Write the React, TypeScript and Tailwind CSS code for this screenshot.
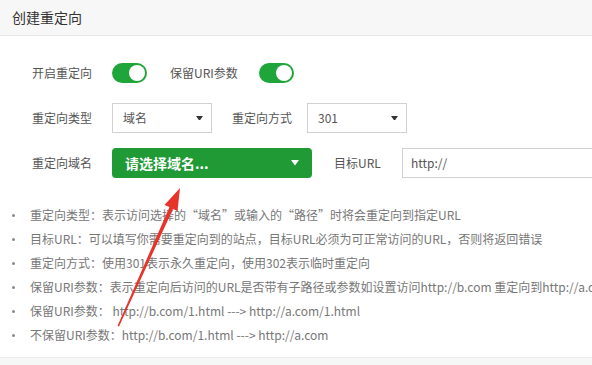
import React from "react";

const font = { fontFamily: '"Noto Sans CJK SC", "Noto Sans", sans-serif' };

function Toggle() {
  return (
    <div className="relative h-[20px] w-[35px] rounded-full bg-[#20a53a]">
      <div className="absolute right-[2px] top-[2px] h-[16px] w-[16px] rounded-full bg-white" />
    </div>
  );
}

function Caret({ color, size = 8 }: { color: string; size?: number }) {
  return (
    <svg width={size} height={size * 0.7} viewBox="0 0 10 7">
      <polygon points="0,0 10,0 5,7" fill={color} />
    </svg>
  );
}

function Select({ value }: { value: string }) {
  return (
    <div className="flex h-[30px] w-[100px] items-center justify-between border border-[#d0d0d0] bg-white pl-[10px] pr-[8px] text-[12px] text-[#555]">
      <span>{value}</span>
      <Caret color="#333" size={7} />
    </div>
  );
}

const items = [
  "重定向类型：表示访问选择的“域名”或输入的“路径”时将会重定向到指定URL",
  "目标URL：可以填写你需要重定向到的站点，目标URL必须为可正常访问的URL，否则将返回错误",
  "重定向方式：使用301表示永久重定向，使用302表示临时重定向",
  "保留URI参数：表示重定向后访问的URL是否带有子路径或参数如设置访问http://b.com 重定向到http://a.com",
  "保留URI参数： http://b.com/1.html ---> http://a.com/1.html",
  "不保留URI参数：http://b.com/1.html ---> http://a.com",
];

export default function App() {
  return (
    <div className="relative h-[365px] w-[592px] overflow-hidden bg-white" style={font}>
      <div className="flex h-[36px] items-center border-b border-[#e6e6e6] bg-[#f7f7f7] pl-[12px] text-[14px] text-[#333]">
        创建重定向
      </div>
      <div className="h-[321px] pt-[22px]">
        <div className="flex h-[30px] items-center pl-[32px] text-[12px] text-[#555]">
          <span className="w-[80px] leading-none">开启重定向</span>
          <Toggle />
          <span className="ml-[23px] w-[89px] leading-none">保留URI参数</span>
          <Toggle />
        </div>
        <div className="mt-[15px] flex h-[30px] items-center pl-[32px] text-[12px] text-[#555]">
          <span className="w-[80px] leading-none">重定向类型</span>
          <Select value="域名" />
          <span className="ml-[20px] w-[75px] leading-none">重定向方式</span>
          <Select value="301" />
        </div>
        <div className="mt-[15px] flex h-[30px] items-center pl-[32px] text-[12px] text-[#555]">
          <span className="w-[80px] shrink-0 leading-none">重定向域名</span>
          <div className="flex h-[30px] w-[200px] shrink-0 items-center justify-between rounded-[4px] bg-[#1f9a35] pl-[13px] pr-[13px] text-[14px] font-semibold text-white">
            <span>请选择域名...</span>
            <Caret color="#fff" size={8} />
          </div>
          <span className="ml-[22px] w-[68px] shrink-0 leading-none">目标URL</span>
          <div className="flex h-[30px] w-[220px] shrink-0 items-center border border-[#d0d0d0] pl-[8px] text-[12px] text-[#555]">
            http://
          </div>
        </div>
        <ul className="mt-[25px] text-[12px] text-[#777]">
          {items.map((t) => (
            <li key={t} className="flex h-[24px] items-center whitespace-nowrap">
              <span className="ml-[12px] mr-[15px] h-[3px] w-[3px] shrink-0 rounded-full bg-[#888]" />
              {t}
            </li>
          ))}
        </ul>
      </div>
      <div className="h-[8px] border-t border-[#ececec] bg-[#f5f6f6]" />
      <svg className="absolute left-0 top-0" width="592" height="365" viewBox="0 0 592 365">
        <polygon
          points="180,188 164.5,205 169.5,207 117.5,326 119,326.5 173,209 177.5,211"
          fill="#e8332a"
        />
      </svg>
    </div>
  );
}
